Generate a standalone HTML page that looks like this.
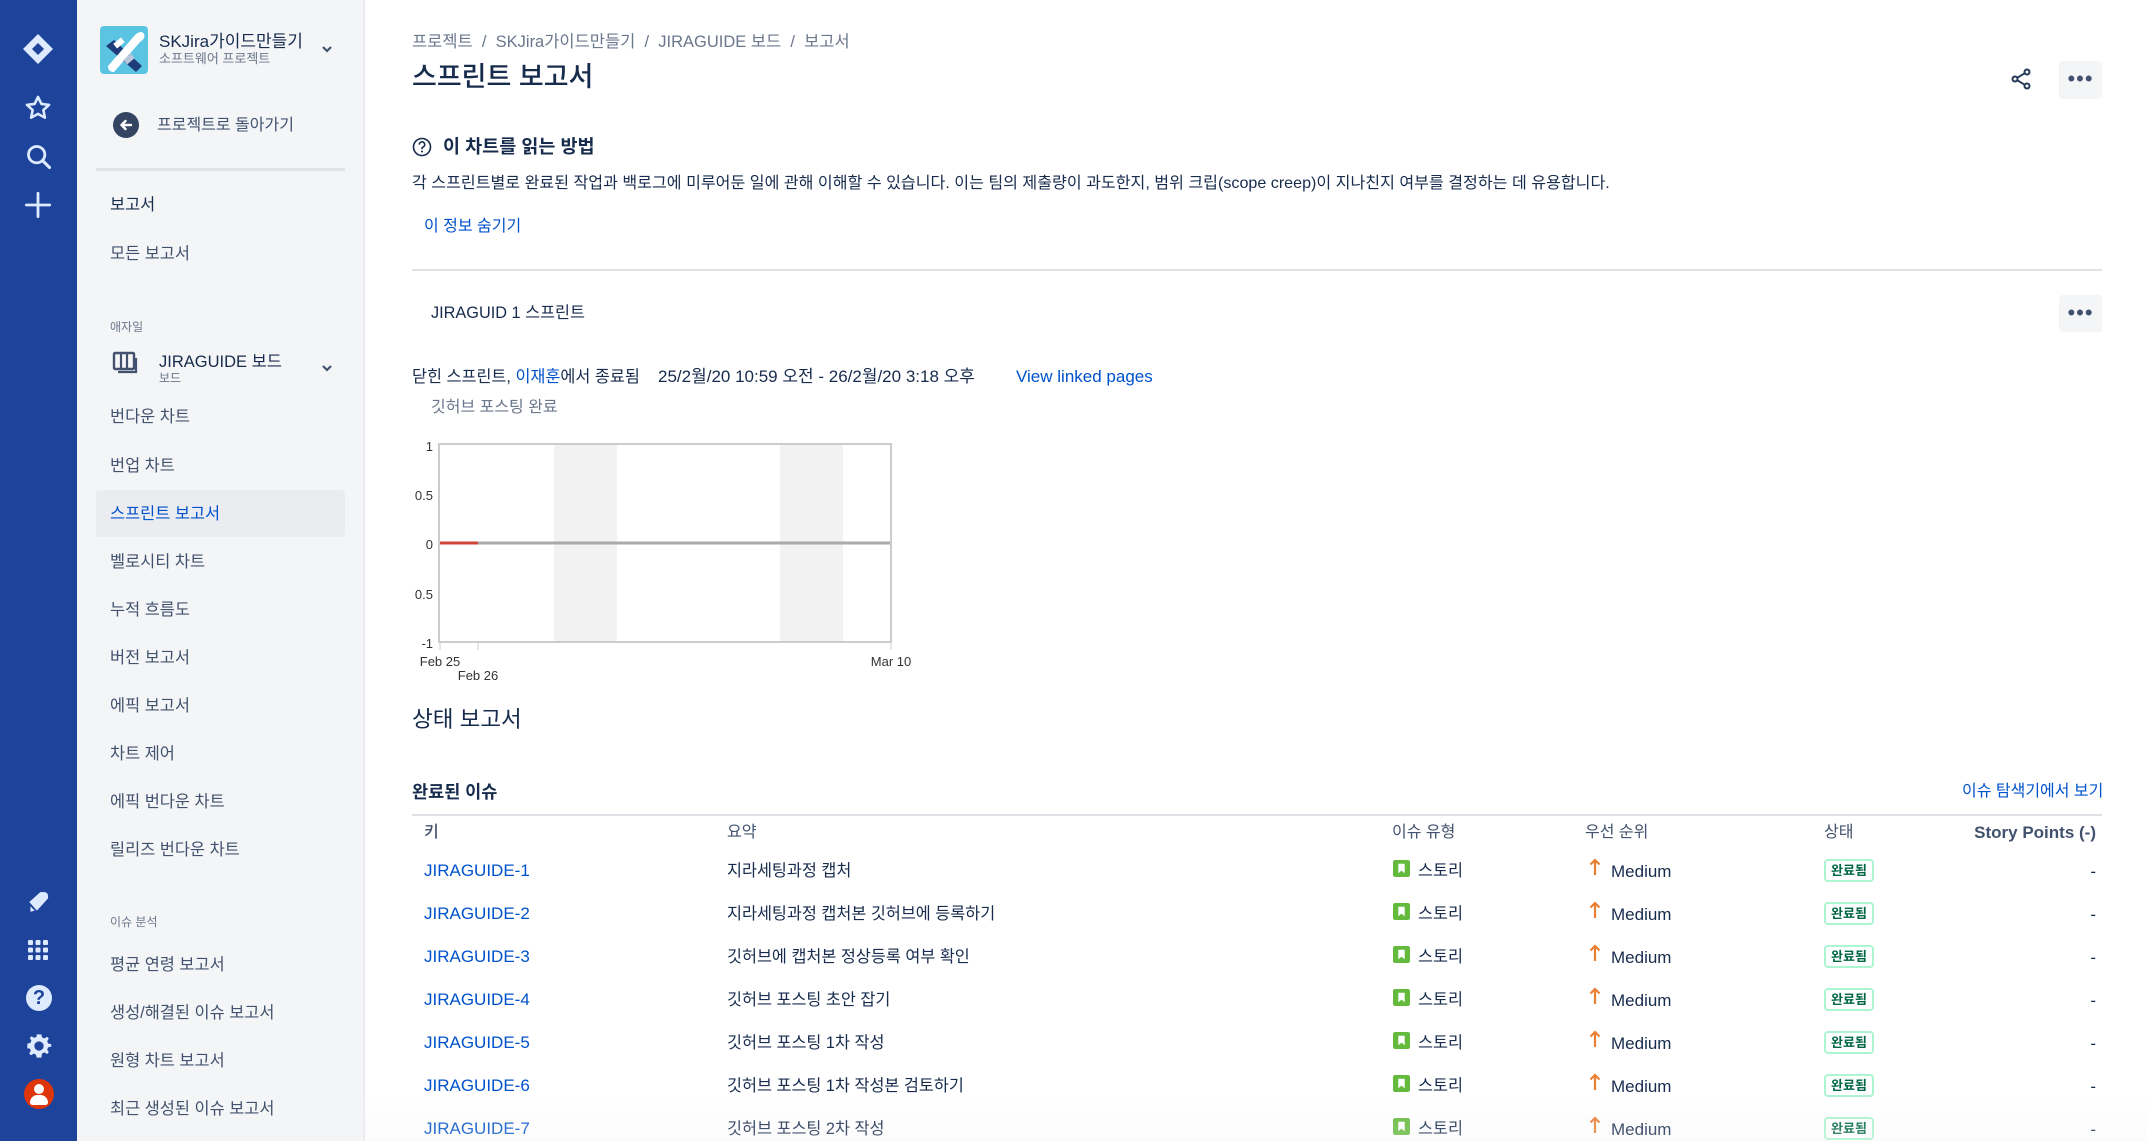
<!DOCTYPE html>
<html><head><meta charset="utf-8">
<style>
*{margin:0;padding:0;box-sizing:border-box}
body{width:2147px;height:1141px;overflow:hidden;background:#fff;font-family:"Liberation Sans","Noto Sans CJK KR",sans-serif;color:#172b4d;position:relative}
.t{position:absolute;white-space:nowrap;line-height:24px;font-size:17px}
#gnav{position:absolute;left:0;top:0;width:77px;height:1141px;background:#1e439b}
#side{position:absolute;left:77px;top:0;width:288px;height:1141px;background:#f4f5f7;border-right:2px solid #ebecf0}
#side .t.s{font-size:16.4px}
.s{color:#42526e}
.blue{color:#0052cc}
.gray{color:#6b778c}
.ic{position:absolute}
.loz{position:absolute;left:1824px;width:50px;height:23px;border:2px solid #abf5d1;border-radius:4px;color:#006644;font-size:13px;font-weight:bold;text-align:center;line-height:19px}
</style></head><body>
<div id="gnav">
<svg class="ic" style="left:22px;top:33px" width="32" height="32" viewBox="0 0 32 32"><path d="M16 1 L31 16 L16 31 L1 16Z" fill="#deebff"/><path d="M16 10 L22 16 L16 22 L10 16Z" fill="#1e439b"/></svg>
<svg class="ic" style="left:24px;top:94px" width="28" height="28" viewBox="0 0 24 24"><path d="M12 2.5l2.9 6 6.6.8-4.9 4.5 1.3 6.5L12 17l-5.9 3.3 1.3-6.5L2.5 9.3l6.6-.8z" fill="none" stroke="#deebff" stroke-width="2.2" stroke-linejoin="round"/></svg>
<svg class="ic" style="left:25px;top:143px" width="28" height="28" viewBox="0 0 24 24"><circle cx="10" cy="10" r="7" fill="none" stroke="#deebff" stroke-width="2.4"/><path d="M15 15l6 6" stroke="#deebff" stroke-width="2.6" stroke-linecap="round"/></svg>
<svg class="ic" style="left:24px;top:191px" width="28" height="28" viewBox="0 0 24 24"><path d="M12 2v20M2 12h20" stroke="#deebff" stroke-width="2.4" stroke-linecap="round"/></svg>
<svg class="ic" style="left:25px;top:889px" width="26" height="26" viewBox="0 0 24 24"><path d="M4 12 L14 3 Q20 2 21 5 Q22 9 20 10 L11 20Z" fill="#deebff"/><path d="M5 16 L9 20 L5 21Z" fill="#deebff"/></svg>
<svg class="ic" style="left:27px;top:939px" width="22" height="22" viewBox="0 0 22 22" fill="#deebff"><rect x="1" y="1" width="5" height="5" rx="1.3"/><rect x="8.5" y="1" width="5" height="5" rx="1.3"/><rect x="16" y="1" width="5" height="5" rx="1.3"/><rect x="1" y="8.5" width="5" height="5" rx="1.3"/><rect x="8.5" y="8.5" width="5" height="5" rx="1.3"/><rect x="16" y="8.5" width="5" height="5" rx="1.3"/><rect x="1" y="16" width="5" height="5" rx="1.3"/><rect x="8.5" y="16" width="5" height="5" rx="1.3"/><rect x="16" y="16" width="5" height="5" rx="1.3"/></svg>
<div class="ic" style="left:26px;top:985px;width:26px;height:26px;border-radius:50%;background:#deebff;color:#1e439b;font-weight:bold;font-size:20px;text-align:center;line-height:26px">?</div>
<svg class="ic" style="left:25px;top:1032px" width="28" height="28" viewBox="0 0 24 24"><path d="M12 2l2 0 .6 2.6 2 .9 2.3-1.4 1.5 1.5-1.4 2.3.9 2 2.6.6v2l-2.6.6-.9 2 1.4 2.3-1.5 1.5-2.3-1.4-2 .9L14 22h-2 -2l-.6-2.6-2-.9-2.3 1.4-1.500-1.500 1.400-2.300-.9-2L2 14v-4l2.600-.6.900-2-1.400-2.300 1.500-1.500 2.300 1.400 2-.9L10 2z" fill="#deebff"/><circle cx="12" cy="12" r="4" fill="#1e439b"/></svg>
<div class="ic" style="left:24px;top:1079px;width:30px;height:30px;border-radius:50%;background:#de350b;overflow:hidden"><div style="position:absolute;left:10px;top:5px;width:10px;height:10px;border-radius:50%;background:#fff"></div><div style="position:absolute;left:6px;top:16px;width:18px;height:10px;border-radius:9px 9px 3px 3px;background:#fff"></div></div>
</div>

<div id="side">
<svg class="ic" style="left:23px;top:26px" width="48" height="48" viewBox="0 0 48 48"><rect width="48" height="48" rx="4" fill="#5bc4e3"/><path d="M6 20 L14 14 L42 40 L36 46Z" fill="#1f3c7a"/><path d="M8 40 L36 8 Q42 4 44 8 Q46 12 40 16 L14 46 Q8 46 8 40Z" fill="#fff"/><rect x="14" y="14" width="10" height="6" fill="#fff" transform="rotate(-40 19 17)"/><rect x="24" y="30" width="10" height="6" fill="#b9c7dd" transform="rotate(-40 29 33)"/></svg>
<div class="t" style="left:82px;top:30px;font-size:17px;color:#172b4d">SKJira가이드만들기</div>
<div class="t" style="left:82px;top:51px;font-size:13px;line-height:16px;color:#6b778c">소프트웨어 프로젝트</div>
<svg class="ic" style="left:244px;top:45px" width="12" height="10" viewBox="0 0 12 10"><path d="M2 2l4 4 4-4" fill="none" stroke="#42526e" stroke-width="2.2"/></svg>
<div class="ic" style="left:36px;top:112px;width:26px;height:26px;border-radius:50%;background:#344563"><svg width="26" height="26" viewBox="0 0 26 26"><path d="M18 13H9M12.5 9L8.5 13l4 4" fill="none" stroke="#fff" stroke-width="2.4" stroke-linecap="round" stroke-linejoin="round"/></svg></div>
<div class="t s" style="left:80px;top:114px;font-size:16px">프로젝트로 돌아가기</div>
<div class="ic" style="left:19px;top:168px;width:249px;height:3px;background:#dfe1e6"></div>
<div class="t" style="left:33px;top:193px;color:#172b4d;font-size:16.4px">보고서</div>
<div class="t s" style="left:33px;top:242px">모든 보고서</div>
<div class="t gray" style="left:33px;top:315px;font-size:12px">애자일</div>
<svg class="ic" style="left:35px;top:351px" width="26" height="24" viewBox="0 0 26 24"><rect x="2" y="2" width="20" height="16" rx="1" fill="none" stroke="#42526e" stroke-width="2.4"/><path d="M9 2v16M15 2v16" stroke="#42526e" stroke-width="2.2"/><path d="M6 21h18v-14" fill="none" stroke="#42526e" stroke-width="2.2"/></svg>
<div class="t" style="left:82px;top:350px;font-size:16.5px;color:#172b4d">JIRAGUIDE 보드</div>
<div class="t gray" style="left:82px;top:371px;font-size:12px;line-height:14px">보드</div>
<svg class="ic" style="left:244px;top:364px" width="12" height="10" viewBox="0 0 12 10"><path d="M2 2l4 4 4-4" fill="none" stroke="#42526e" stroke-width="2.2"/></svg>
<div class="t s" style="left:33px;top:405px">번다운 차트</div>
<div class="t s" style="left:33px;top:454px">번업 차트</div>
<div class="ic" style="left:19px;top:490px;width:249px;height:47px;background:#ebecf0;border-radius:3px"></div>
<div class="t blue" style="left:33px;top:502px;font-size:16.4px">스프린트 보고서</div>
<div class="t s" style="left:33px;top:550px">벨로시티 차트</div>
<div class="t s" style="left:33px;top:598px">누적 흐름도</div>
<div class="t s" style="left:33px;top:646px">버전 보고서</div>
<div class="t s" style="left:33px;top:694px">에픽 보고서</div>
<div class="t s" style="left:33px;top:742px">차트 제어</div>
<div class="t s" style="left:33px;top:790px">에픽 번다운 차트</div>
<div class="t s" style="left:33px;top:838px">릴리즈 번다운 차트</div>
<div class="t gray" style="left:33px;top:910px;font-size:12px">이슈 분석</div>
<div class="t s" style="left:33px;top:953px">평균 연령 보고서</div>
<div class="t s" style="left:33px;top:1001px">생성/해결된 이슈 보고서</div>
<div class="t s" style="left:33px;top:1049px">원형 차트 보고서</div>
<div class="t s" style="left:33px;top:1097px">최근 생성된 이슈 보고서</div>
</div>

<!-- main -->
<div class="t gray" style="left:412px;top:30px;font-size:16.5px">프로젝트 &nbsp;/&nbsp; SKJira가이드만들기 &nbsp;/&nbsp; JIRAGUIDE 보드 &nbsp;/&nbsp; 보고서</div>
<div class="t" style="left:412px;top:59px;font-size:27px;line-height:36px;font-weight:500">스프린트 보고서</div>
<svg class="ic" style="left:2010px;top:67px" width="24" height="24" viewBox="0 0 24 24"><circle cx="5" cy="12" r="2.5" fill="none" stroke="#253858" stroke-width="2"/><circle cx="17" cy="5" r="2.5" fill="none" stroke="#253858" stroke-width="2"/><circle cx="17" cy="19" r="2.5" fill="none" stroke="#253858" stroke-width="2"/><path d="M7.2 10.8L14.8 6.2M7.2 13.2l7.6 4.6" stroke="#253858" stroke-width="2"/></svg>
<div class="ic" style="left:2059px;top:61px;width:43px;height:38px;background:#f4f5f7;border-radius:4px;text-align:center;line-height:36px;font-size:22px;color:#42526e;letter-spacing:1px">&bull;&bull;&bull;</div>

<svg class="ic" style="left:412px;top:137px" width="20" height="20" viewBox="0 0 20 20"><circle cx="10" cy="10" r="8.5" fill="none" stroke="#172b4d" stroke-width="1.6"/><path d="M7.3 7.6a2.7 2.7 0 1 1 3.6 2.5c-.6.3-.9.8-.9 1.5v.6" fill="none" stroke="#172b4d" stroke-width="1.6"/><circle cx="10" cy="14.5" r="1" fill="#172b4d"/></svg>
<div class="t" style="left:443px;top:135px;font-size:18.5px;font-weight:bold">이 차트를 읽는 방법</div>
<div class="t" style="left:412px;top:171px;font-size:16.1px">각 스프린트별로 완료된 작업과 백로그에 미루어둔 일에 관해 이해할 수 있습니다. 이는 팀의 제출량이 과도한지, 범위 크립(scope creep)이 지나친지 여부를 결정하는 데 유용합니다.</div>
<div class="t blue" style="left:424px;top:215px;font-size:16px">이 정보 숨기기</div>
<div class="ic" style="left:412px;top:269px;width:1690px;height:2px;background:#dfe1e6"></div>

<div class="t" style="left:431px;top:301px;font-size:16.3px">JIRAGUID 1 스프린트</div>
<div class="ic" style="left:2059px;top:295px;width:43px;height:37px;background:#f4f5f7;border-radius:4px;text-align:center;line-height:35px;font-size:22px;color:#42526e;letter-spacing:1px">&bull;&bull;&bull;</div>

<div class="t" style="left:412px;top:365px;font-size:16.3px">닫힌 스프린트, <span class="blue">이재훈</span>에서 종료됨</div>
<div class="t" style="left:658px;top:365px;font-size:17px">25/2월/20 10:59 오전 - 26/2월/20 3:18 오후</div>
<div class="t blue" style="left:1016px;top:365px;font-size:17px">View linked pages</div>
<div class="t gray" style="left:431px;top:396px;font-size:16px">깃허브 포스팅 완료</div>

<svg class="ic" style="left:400px;top:430px" width="530" height="260" viewBox="400 430 530 260" font-family="Liberation Sans, sans-serif" font-size="13" fill="#333">
<rect x="439" y="444" width="452" height="198" fill="#fff" stroke="#ccc" stroke-width="2"/>
<rect x="554" y="445" width="63" height="196" fill="#f2f2f2"/>
<rect x="780" y="445" width="63" height="196" fill="#f2f2f2"/>
<line x1="440" y1="543" x2="890" y2="543" stroke="#aaa" stroke-width="3"/>
<line x1="440" y1="543" x2="478" y2="543" stroke="#d04437" stroke-width="3"/>
<line x1="439" y1="444" x2="439" y2="642" stroke="#ccc" stroke-width="2"/>
<g text-anchor="end"><text x="433" y="451">1</text><text x="433" y="500">0.5</text><text x="433" y="549">0</text><text x="433" y="599">0.5</text><text x="433" y="648">-1</text></g>
<line x1="440" y1="643" x2="440" y2="650" stroke="#ccc"/><line x1="478" y1="643" x2="478" y2="650" stroke="#ccc"/><line x1="891" y1="643" x2="891" y2="650" stroke="#ccc"/>
<g text-anchor="middle"><text x="440" y="666">Feb 25</text><text x="478" y="680">Feb 26</text><text x="891" y="666">Mar 10</text></g>
</svg>

<div class="t" style="left:412px;top:705px;font-size:22.5px;line-height:30px">상태 보고서</div>
<div class="t" style="left:412px;top:780px;font-size:17.5px;font-weight:bold">완료된 이슈</div>
<div class="t blue" style="left:1962px;top:780px;font-size:16px">이슈 탐색기에서 보기</div>
<div class="ic" style="left:412px;top:814px;width:1690px;height:2px;background:#dfe1e6"></div>

<div class="t s" style="left:424px;top:821px;font-size:16px;font-weight:500">키</div>
<div class="t s" style="left:727px;top:821px;font-size:16px">요약</div>
<div class="t s" style="left:1392px;top:821px;font-size:16px">이슈 유형</div>
<div class="t s" style="left:1585px;top:821px;font-size:16px">우선 순위</div>
<div class="t s" style="left:1824px;top:821px;font-size:16px">상태</div>
<div class="t s" style="left:1946px;top:821px;font-size:17px;font-weight:bold;width:150px;text-align:right">Story Points (-)</div>

<div id="rows"></div>
<script>
var sums=["지라세팅과정 캡처","지라세팅과정 캡처본 깃허브에 등록하기","깃허브에 캡처본 정상등록 여부 확인","깃허브 포스팅 초안 잡기","깃허브 포스팅 1차 작성","깃허브 포스팅 1차 작성본 검토하기","깃허브 포스팅 2차 작성"];
var ys=[871,914,957,1000,1043,1086,1129],h="";
for(var i=0;i<7;i++){var y=ys[i];
h+='<div class="t blue" style="left:424px;top:'+(y-12)+'px">JIRAGUIDE-'+(i+1)+'</div>';
h+='<div class="t" style="left:727px;top:'+(y-12)+'px;font-size:16.3px">'+sums[i]+'</div>';
h+='<svg class="ic" style="left:1393px;top:'+(y-11)+'px" width="17" height="17" viewBox="0 0 16 16"><rect width="16" height="16" rx="2" fill="#63ba3c"/><path d="M5 3.5h6v9l-3-2.5-3 2.5z" fill="#fff"/></svg>';
h+='<div class="t" style="left:1418px;top:'+(y-12)+'px;font-size:16.3px">스토리</div>';
h+='<svg class="ic" style="left:1589px;top:'+(y-13)+'px" width="12" height="18" viewBox="0 0 12 18"><path d="M6 17V2M1.5 6.5L6 2l4.5 4.5" fill="none" stroke="#e97f33" stroke-width="2.2"/></svg>';
h+='<div class="t" style="left:1611px;top:'+(y-11)+'px">Medium</div>';
h+='<div class="loz" style="top:'+(y-12)+'px">완료됨</div>';
h+='<div class="t" style="left:2080px;top:'+(y-11)+'px;width:16px;text-align:right">-</div>';}
document.getElementById('rows').innerHTML=h;
</script>
<div class="ic" style="left:365px;top:1095px;width:1782px;height:46px;background:linear-gradient(rgba(255,255,255,0),rgba(240,240,240,0.25))"></div>
</body></html>
